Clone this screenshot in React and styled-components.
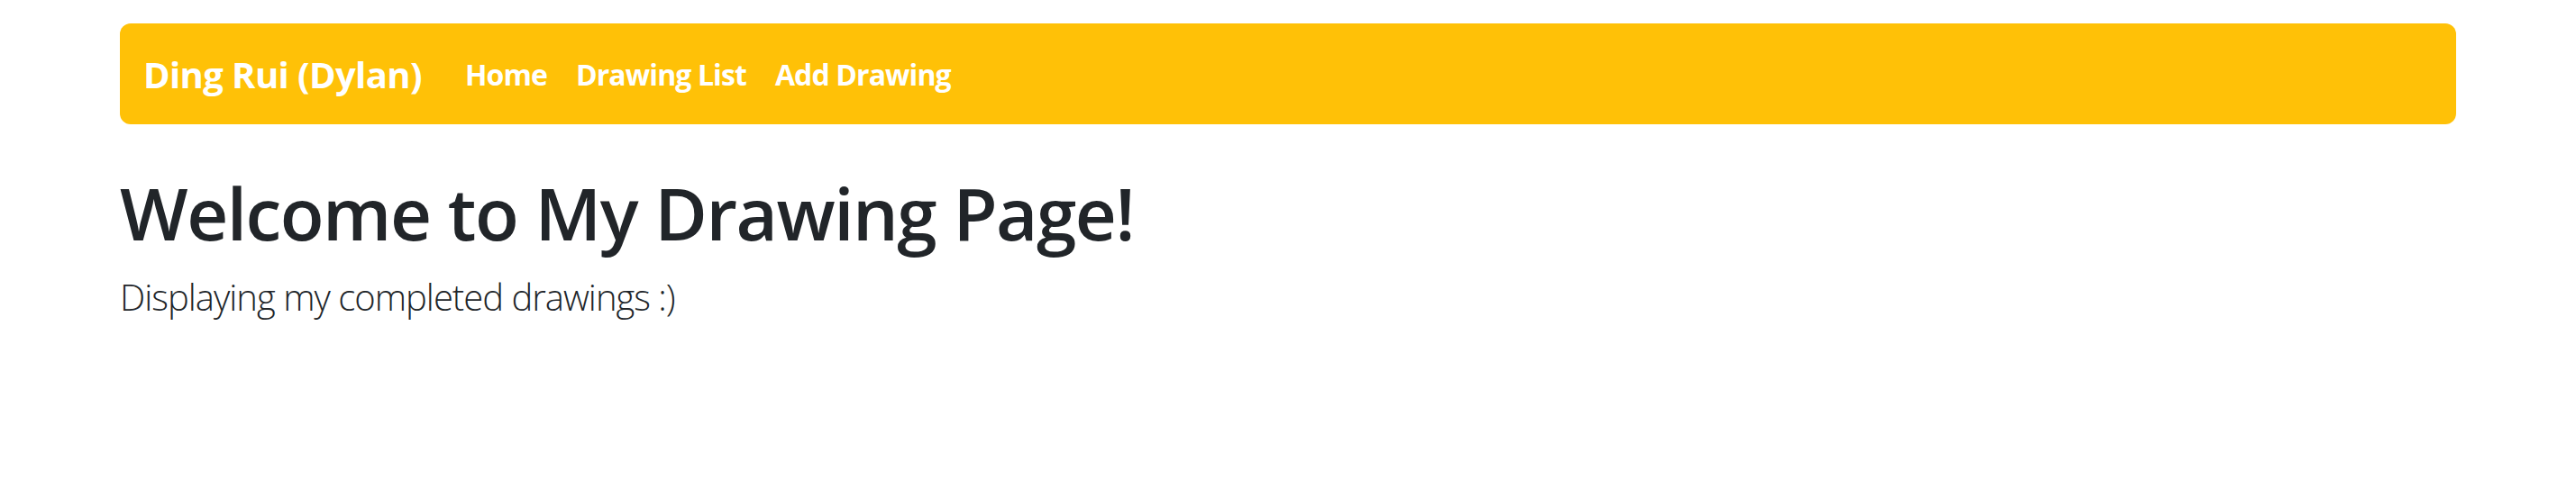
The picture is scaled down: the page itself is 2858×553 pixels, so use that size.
import React from 'react';
import styled, { createGlobalStyle } from 'styled-components';

const GlobalStyle = createGlobalStyle`
  body {
    margin: 0;
    background: #fff;
    color: #212529;
    font-family: "Open Sans", "Noto Sans", sans-serif;
  }
`

const Page = styled.div`
  max-width: 2592px;
  margin: 0 auto;
  padding-top: 26px;
`

const NavBar = styled.nav`
  display: flex;
  align-items: center;
  height: 112px;
  padding: 0 26px;
  background: #ffc107;
  border-radius: 12px;
  box-sizing: border-box;
`

const Brand = styled.a`
  font-size: 40px;
  font-weight: 700;
  letter-spacing: -0.6px;
  color: #fff;
  margin-right: 32px;
  text-decoration: none;
  white-space: nowrap;
`

const NavLinks = styled.div`
  display: flex;
  align-items: center;
`

const NavLink = styled.a`
  font-size: 32px;
  font-weight: 700;
  letter-spacing: -0.9px;
  color: #fff;
  padding: 0 16px;
  text-decoration: none;
  white-space: nowrap;
`

const Heading = styled.h1`
  font-size: 80px;
  font-weight: 600;
  letter-spacing: -1.5px;
  line-height: 1.2;
  margin: 50px 0 16px;
  color: #212529;
`

const Lead = styled.p`
  font-size: 40px;
  font-weight: 300;
  letter-spacing: -1px;
  line-height: 1.5;
  margin: 0;
  color: #212529;
`

let links = ['Home', 'Drawing List', 'Add Drawing']

export default function App() {
  return (
    <>
      <GlobalStyle />
      <Page>
        <NavBar>
          <Brand href="#">Ding Rui (Dylan)</Brand>
          <NavLinks>
            {links.map((l) => (
              <NavLink key={l} href="#">{l}</NavLink>
            ))}
          </NavLinks>
        </NavBar>

        <Heading>Welcome to My Drawing Page!</Heading>
        <Lead>Displaying my completed drawings :)</Lead>
      </Page>
    </>
  )
}
